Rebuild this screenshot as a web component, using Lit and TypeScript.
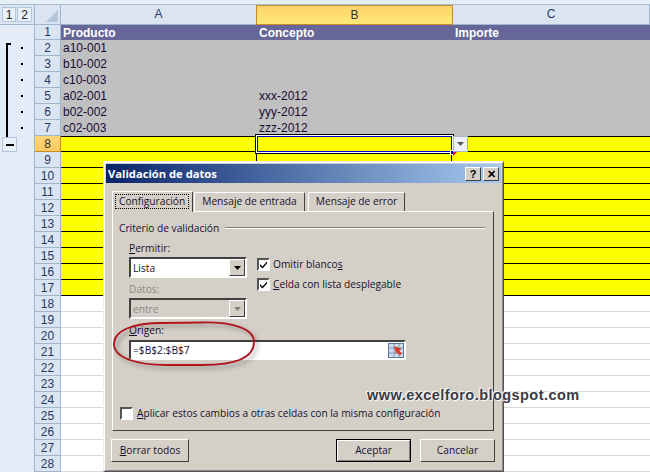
import { LitElement, html, css } from "lit";
import { customElement } from "lit/decorators.js";

const arrow = html`<svg width="7" height="4" viewBox="0 0 7 4"><path d="M0 0h7L3.5 4z" fill="currentColor"/></svg>`;
const check = html`<svg width="9" height="9" viewBox="0 0 9 9"><path d="M1 4l2.5 2.5L8 1.5v2L3.5 8.5 1 6z" fill="#000"/></svg>`;

type Row = { n: number; a?: string; b?: string; c?: string; kind: string };
const rows: Row[] = [];
const As = ["a10-001", "b10-002", "c10-003", "a02-001", "b02-002", "c02-003"];
const Bs = ["", "", "", "xxx-2012", "yyy-2012", "zzz-2012"];
rows.push({ n: 1, a: "Producto", b: "Concepto", c: "Importe", kind: "head" });
As.forEach((a, i) => rows.push({ n: i + 2, a, b: Bs[i], kind: "grey" }));
for (let n = 8; n <= 17; n++) rows.push({ n, kind: "yellow" });
for (let n = 18; n <= 28; n++) rows.push({ n, kind: "plain" });

@customElement("app-root")
export class AppRoot extends LitElement {
  static styles = css`
    :host { display: block; width: 650px; height: 472px; overflow: hidden; position: relative; background: #fff;
      font-family: "Liberation Sans", Arial, sans-serif; font-size: 12px; color: #111; }
    .strip { height: 4px; background: #e6eef8; border-bottom: 1px solid #a9bcd2; }
    .row { display: flex; height: 16px; box-sizing: border-box; }
    .gut { width: 34px; flex: none; background: #e3ecf7; border-right: 1px solid #9eb6ce; position: relative; display: flex; align-items: center; justify-content: center; box-sizing: content-box; }
    .dot { width: 2px; height: 2px; background: #000; margin-left: 10px; }
    .num { width: 25px; flex: none; background: #dbe5f1; border-right: 1px solid #9eb6ce; border-bottom: 1px solid #9eb6ce; box-sizing: content-box;
      height: 15px; text-align: center; line-height: 16px; color: #1f3a63; font-size: 12px; }
    .num.sel { background: linear-gradient(#ffd87a, #fdc95b); border-color: #c98a2e; color: #333; }
    .head { height: 20px; }
    .head .gut { align-items: flex-start; justify-content: flex-start; gap: 1px; padding-left: 0; border-bottom: 1px solid #9eb6ce; height: 19px; background: #dbe5f1; }
    .lvl { width: 15px; height: 15px; margin-top: 2px; border: 1px solid #b4c6dc; box-sizing: border-box; text-align: center; line-height: 14px; font-size: 12px; background: #e8f0fa; color: #222; }
    .lvl:first-child { margin-left: 2px; width: 14px; }
    .corner { width: 25px; flex: none; height: 19px; background: #dbe5f1; border-right: 1px solid #9eb6ce; border-bottom: 1px solid #9eb6ce; box-sizing: content-box; position: relative; }
    .corner svg { position: absolute; right: 2px; bottom: 2px; }
    .col { height: 19px; background: #dbe5f1; border-right: 1px solid #9eb6ce; border-bottom: 1px solid #9eb6ce; text-align: center; line-height: 19px; color: #1f3a63; box-sizing: content-box; }
    .col.sel { background: linear-gradient(#fed469, #ffe878); border: 1px solid #c98a2e; height: 18px; line-height: 18px; color: #333; margin-left: -1px; width: 195px; }
    .a { width: 195px; flex: none; }
    .b { width: 196px; flex: none; }
    .c { flex: 1; }
    .cell { box-sizing: border-box; height: 16px; line-height: 17px; padding-left: 2px; white-space: nowrap; overflow: hidden; }
    .cell.b, .cell.c { padding-left: 3px; }
    .k-head .cell { background: #666699; color: #fff; font-weight: bold; height: 15px; line-height: 16px; }
    .k-head { height: 15px; }
    .k-head .num { height: 14px; line-height: 15px; }
    .k-grey .cell { background: #c0c0c0; color: #1a0a33; }
    .k-yellow .cell { background: #ff0; border-bottom: 1px solid #000; }
    .k-yellow .cell.b { border-left: 1px solid #000; border-right: 1px solid #000; }
    .k-plain .cell { border-bottom: 1px solid #d9d9d9; }
    .first .cell { border-top: 1px solid #000; }
    .active { position: absolute; left: 256px; top: 135px; width: 197px; height: 18px; box-sizing: border-box; border: 1px solid #fff; outline: 1px solid #000; }
    .active::before { content: ""; position: absolute; inset: 0; border: 1px solid #0000c0; }
    .dd { position: absolute; left: 453px; top: 136px; width: 15px; height: 16px; background: #eef2f8; border: 1px solid #a9b4c4; box-sizing: border-box; color: #555; display: flex; align-items: center; justify-content: center; }
    .handle { position: absolute; left: 450px; top: 150px; width: 3px; height: 3px; background: #0000c0; border: 1px solid #fff; }
    .tri { position: absolute; left: 453px; top: 152px; border-top: 4px solid #f00; border-right: 4px solid transparent; }
    .bar { position: absolute; left: 6px; top: 43px; width: 5px; height: 94px; border-left: 2px solid #000; border-top: 2px solid #000; box-sizing: border-box; }
    .minus { position: absolute; left: 2px; top: 137px; width: 15px; height: 15px; background: #e8f0fa; border: 1px solid #b4c6dc; box-sizing: border-box; display: flex; align-items: center; justify-content: center; }
    .minus i { width: 8px; height: 2px; background: #000; }

    /* dialog */
    .dlg { position: absolute; left: 103px; top: 161px; width: 401px; height: 311px; box-sizing: border-box; background: #d4d0c8;
      border: 1px solid; border-color: #eee #555 #555 #eee; box-shadow: inset 1px 1px 0 #fff, inset -1px -1px 0 #888;
      font-family: "Open Sans", sans-serif; font-size: 10.2px; color: #161030; padding: 2px; display: flex; flex-direction: column; }
    .title { height: 19px; flex: none; background: linear-gradient(90deg, #0a246a, #a6caf0); color: #fff; font: bold 11.2px "Open Sans", sans-serif; line-height: 19px; padding-left: 2px; display: flex; align-items: center; justify-content: space-between; padding-right: 2px; }
    .tbtn { width: 16px; height: 14px; background: #d4d0c8; box-sizing: border-box; border: 1px solid; border-color: #fff #404040 #404040 #fff; color: #000; font: bold 11px "Liberation Sans", sans-serif; text-align: center; line-height: 12px; }
    .tbtns { display: flex; gap: 2px; }
    .body { padding: 8px 7px 0 6px; display: flex; flex-direction: column; flex: 1; }
    .tabs { display: flex; height: 20px; align-items: flex-end; }
    .tab { height: 19px; box-sizing: border-box; border: 1px solid; border-color: #fff #404040 transparent #fff; border-bottom: none; border-radius: 2px 2px 0 0; padding: 0 7px; line-height: 17px; white-space: nowrap; margin-right: 3px; }
    .tab.on { height: 21px; position: relative; z-index: 1; margin-bottom: -1px; background: #d4d0c8; padding: 2px 3px 0 2px; margin-right: 1px; }
    .tab.on span { display: block; border: 1px dotted #000; padding: 0 3px; line-height: 13px; }
    .panel { height: 220px; box-sizing: border-box; border: 1px solid; border-color: #fff #404040 #404040 #fff; padding: 8px 8px 0 6px; position: relative; display: flex; flex-direction: column; }
    .legend { display: flex; align-items: center; gap: 6px; height: 16px; }
    .legend i { flex: 1; height: 2px; background: #808080; border-bottom: 1px solid #fff; box-sizing: border-box; }
    .cols { display: flex; gap: 10px; padding-left: 10px; margin-top: 5px; }
    .left { width: 118px; flex: none; }
    .lbl { height: 14px; line-height: 14px; margin-bottom: 2px; }
    .lbl.dis { color: #8a8a86; margin-top: 4px; }
    u { text-underline-offset: 1px; }
    .sel-box { height: 21px; box-sizing: border-box; border: 2px solid; border-color: #404040 #fff #fff #404040; background: #fff; display: flex; align-items: center; padding-left: 2px; justify-content: space-between; }
    .sel-box.dis { background: #d4d0c8; color: #8a8a86; }
    .arr { width: 16px; height: 17px; background: #d4d0c8; box-sizing: border-box; border: 1px solid; border-color: #fff #404040 #404040 #fff; display: flex; align-items: center; justify-content: center; color: #000; }
    .arr.dis { color: #808080; }
    .chk-row { display: flex; align-items: center; gap: 3px; height: 20px; white-space: nowrap; }
    .rights { padding-top: 13px; }
    .box { width: 13px; height: 13px; box-sizing: border-box; border: 2px solid; border-color: #555 #fff #fff #555; background: #fff; display: flex; align-items: center; justify-content: center; flex: none; }
    .org { margin-left: 10px; margin-top: 4px; }
    .org .lbl { margin-bottom: 3px; }
    .input { width: 277px; height: 20px; box-sizing: border-box; border: 2px solid; border-color: #404040 #fff #fff #404040; background: #fff; display: flex; align-items: center; justify-content: space-between; padding-left: 2px; }
    .apply { margin-top: 46px; margin-left: 1px; gap: 4px; height: 14px; }
    .foot { display: flex; margin: 8px -1px 0 -1px; gap: 9px; }
    .btn { width: 75px; height: 23px; box-sizing: border-box; border: 1px solid; border-color: #fff #404040 #404040 #fff; text-align: center; line-height: 20px; }
    .btn.def { border-color: #000; box-shadow: inset 1px 1px 0 #fff, inset -1px -1px 0 #808080; margin-left: auto; }
    .btn.wide { width: 78px; }
    .ring { position: absolute; left: 112px; top: 320px; overflow: visible; filter: drop-shadow(3px 3px 2px rgba(0,0,0,.35)); }
    .mark { position: absolute; left: 367px; top: 387px; font: bold 14.5px "Liberation Sans", sans-serif; letter-spacing: .45px; color: #3a3a44; text-shadow: 1px 1px 1px #fff, -1px -1px 1px #fff; white-space: nowrap; }
  `;

  private renderRow(r: Row) {
    const sel = r.n === 8;
    return html`<div class="row k-${r.kind} ${sel ? "first" : ""}">
      <div class="gut">${r.n >= 2 && r.n <= 7 ? html`<div class="dot"></div>` : ""}</div>
      <div class="num ${sel ? "sel" : ""}">${r.n}</div>
      <div class="cell a">${r.a ?? ""}</div>
      <div class="cell b">${r.b ?? ""}</div>
      <div class="cell c">${r.c ?? ""}</div>
    </div>`;
  }

  render() {
    return html`
      <div class="strip"></div>
      <div class="row head">
        <div class="gut"><div class="lvl">1</div><div class="lvl">2</div></div>
        <div class="corner"><svg width="12" height="12" viewBox="0 0 12 12"><path d="M12 0v12H0z" fill="#b4c6dc"/></svg></div>
        <div class="col a">A</div>
        <div class="col b sel">B</div>
        <div class="col c">C</div>
      </div>
      ${rows.map((r) => this.renderRow(r))}
      <div class="bar"></div>
      <div class="minus"><i></i></div>
      <div class="active"></div>
      <div class="handle"></div>
      <div class="tri"></div>
      <div class="dd">${arrow}</div>

      <div class="dlg">
        <div class="title"><span>Validación de datos</span><div class="tbtns"><div class="tbtn">?</div><div class="tbtn">✕</div></div></div>
        <div class="body">
          <div class="tabs">
            <div class="tab on"><span>Configuración</span></div>
            <div class="tab">Mensaje de entrada</div>
            <div class="tab">Mensaje de error</div>
          </div>
          <div class="panel">
            <div class="legend">Criterio de validación<i></i></div>
            <div class="cols">
              <div class="left">
                <div class="lbl"><u>P</u>ermitir:</div>
                <div class="sel-box">Lista<div class="arr">${arrow}</div></div>
                <div class="lbl dis">Datos:</div>
                <div class="sel-box dis">entre<div class="arr dis">${arrow}</div></div>
              </div>
              <div class="rights">
                <div class="chk-row"><div class="box">${check}</div><span>Omitir blanco<u>s</u></span></div>
                <div class="chk-row"><div class="box">${check}</div><span><u>C</u>elda con lista desplegable</span></div>
              </div>
            </div>
            <div class="org">
              <div class="lbl"><u>O</u>rigen:</div>
              <div class="input"><span>=$B$2:$B$7</span>
                <svg width="16" height="15" viewBox="0 0 16 15"><rect x="0.5" y="0.5" width="15" height="14" fill="#cfdcec" stroke="#5a7aa0"/><path d="M1 5h14M1 10h14M6 1v13M11 1v13" stroke="#7f9cc0"/><path d="M6 3l8 3-3 1.5 3 3-2 2-3-3L8 11z" fill="#d8402a"/></svg>
              </div>
            </div>
            <div class="chk-row apply"><div class="box"></div><span><u>A</u>plicar estos cambios a otras celdas con la misma configuración</span></div>
          </div>
          <div class="foot">
            <div class="btn wide"><u>B</u>orrar todos</div>
            <div class="btn def">Aceptar</div>
            <div class="btn">Cancelar</div>
          </div>
        </div>
      </div>
      <svg class="ring" width="146" height="50" viewBox="0 0 146 50">
        <path d="M50 3C22 3 2 10 2 24C2 38 25 45 55 45H90C122 45 142 38 142 22C142 8 120 2 90 2.5Z" fill="none" stroke="#b0141c" stroke-width="1.8"/>
      </svg>
      <div class="mark">www.excelforo.blogspot.com</div>
    `;
  }
}
